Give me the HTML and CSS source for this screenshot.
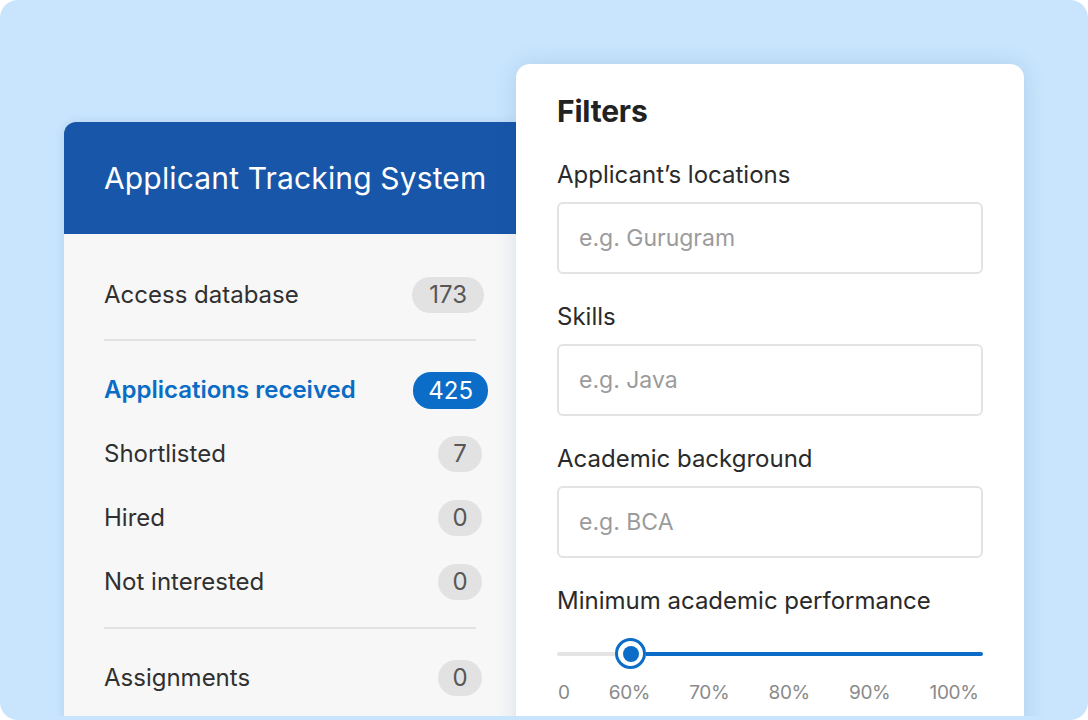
FILE: index.html
```html
<!DOCTYPE html>
<html lang="en">
<head>
<meta charset="utf-8">
<title>Applicant Tracking System</title>
<link rel="stylesheet" href="styles.css">
</head>
<body>
<div class="frame">
  <div class="stage">
    <section class="ats">
      <header class="ats-head">
        <h1 class="ats-title">Applicant Tracking System</h1>
      </header>
      <div class="ats-body">
        <div class="row"><span class="row-label">Access database</span><span class="badge badge-wide">173</span></div>
        <div class="divider"></div>
        <div class="row row-active"><span class="row-label">Applications received</span><span class="badge badge-active">425</span></div>
        <div class="row"><span class="row-label">Shortlisted</span><span class="badge">7</span></div>
        <div class="row"><span class="row-label">Hired</span><span class="badge">0</span></div>
        <div class="row"><span class="row-label">Not interested</span><span class="badge">0</span></div>
        <div class="divider divider-low"></div>
        <div class="row"><span class="row-label">Assignments</span><span class="badge">0</span></div>
      </div>
    </section>

    <section class="filters">
      <h2 class="filters-title">Filters</h2>
      <div class="field">
        <label class="field-label" for="loc">Applicant’s locations</label>
        <input class="field-input" id="loc" type="text" placeholder="e.g. Gurugram">
      </div>
      <div class="field">
        <label class="field-label" for="skills">Skills</label>
        <input class="field-input" id="skills" type="text" placeholder="e.g. Java">
      </div>
      <div class="field">
        <label class="field-label" for="acad">Academic background</label>
        <input class="field-input" id="acad" type="text" placeholder="e.g. BCA">
      </div>
      <div class="field">
        <span class="field-label">Minimum academic performance</span>
        <div class="slider">
          <div class="slider-rest"></div>
          <div class="slider-thumb"><span class="slider-dot"></span></div>
          <div class="slider-fill"></div>
        </div>
        <div class="scale">
          <span>0</span><span>60%</span><span>70%</span><span>80%</span><span>90%</span><span>100%</span>
        </div>
      </div>
    </section>
  </div>
</div>
</body>
</html>
```

FILE: styles.css
```css
* { box-sizing: border-box; }

html, body {
  margin: 0;
  padding: 0;
  background: #ffffff;
  font-family: "Inter", "Noto Sans", "Liberation Sans", sans-serif;
}

.frame {
  width: 1088px;
  height: 720px;
  border-radius: 18px;
  background: #c9e5fd;
  overflow: hidden;
}

.stage {
  height: 716px;
  overflow: hidden;
  display: flex;
  align-items: flex-start;
  padding: 64px 0 0 64px;
}

/* ---------- Left card ---------- */
.ats {
  width: 452px;
  margin-top: 58px;
  background: #f7f7f7;
  border-radius: 12px 0 0 0;
  box-shadow: 0 0 10px rgba(20, 70, 140, 0.12);
  flex: none;
  min-height: 640px;
}

.ats-head {
  height: 112px;
  background: #1756a8;
  border-radius: 12px 0 0 0;
  display: flex;
  align-items: center;
  padding: 0 0 0 40px;
}

.ats-title {
  margin: 0;
  color: #ffffff;
  font-size: 30px;
  font-weight: 400;
  line-height: 36px;
  white-space: nowrap;
  letter-spacing: 0.15px;
}

.ats-body {
  padding: 29px 34px 0 40px;
}

.row {
  height: 64px;
  display: flex;
  align-items: center;
  justify-content: space-between;
}

.row-label {
  font-size: 24px;
  color: #303030;
  line-height: 30px;
}

.row-active .row-label {
  color: #0b6cc5;
  font-weight: 600;
}

.badge {
  height: 36px;
  min-width: 44px;
  padding: 0 14px;
  border-radius: 18px;
  background: #e2e2e2;
  color: #575757;
  font-size: 24px;
  line-height: 36px;
  text-align: center;
}

.badge-wide {
  padding: 0 17px;
  margin-right: -2px;
}

.badge-active {
  background: #0b6dc7;
  color: #ffffff;
  height: 37px;
  line-height: 37px;
  padding: 0 15px;
  margin-right: -6px;
}

.divider {
  height: 2px;
  background: #e3e3e3;
  margin: 12px 6px 17px 0;
}

.divider-low { margin-top: 13px; }

/* ---------- Filters card ---------- */
.filters {
  width: 508px;
  flex: none;
  position: relative;
  z-index: 1;
  background: #ffffff;
  border-radius: 14px;
  box-shadow: 0 0 22px rgba(30, 80, 140, 0.14);
  padding: 29px 41px 40px 41px;
  min-height: 700px;
}

.filters-title {
  margin: 0;
  padding-bottom: 3px;
  font-size: 30px;
  font-weight: 700;
  line-height: 36px;
  color: #222222;
  letter-spacing: -0.2px;
}

.field {
  margin-top: 29px;
  display: flex;
  flex-direction: column;
}

.field-label {
  font-size: 24px;
  line-height: 28px;
  color: #2a2a2a;
}

.field-input {
  margin-top: 13px;
  width: 426px;
  height: 72px;
  border: 2px solid #e3e3e3;
  border-radius: 6px;
  padding: 0 20px;
  font-family: inherit;
  font-size: 23px;
  color: #333333;
  background: #ffffff;
  outline: none;
}

.field-input::placeholder {
  color: #9b9b9b;
}

.slider {
  margin-top: 23px;
  width: 426px;
  height: 31px;
  display: flex;
  align-items: center;
}

.slider-rest {
  width: 58px;
  height: 4px;
  background: #e4e4e4;
  border-radius: 2px 0 0 2px;
}

.slider-thumb {
  width: 31px;
  height: 31px;
  border-radius: 50%;
  border: 3px solid #0b6dc7;
  background: #ffffff;
  display: flex;
  align-items: center;
  justify-content: center;
  flex: none;
}

.slider-dot {
  width: 16px;
  height: 16px;
  border-radius: 50%;
  background: #0b6dc7;
}

.slider-fill {
  flex: 1;
  height: 4px;
  background: #0b6dc7;
  border-radius: 0 2px 2px 0;
}

.scale {
  margin-top: 12px;
  display: flex;
  gap: 39px;
  padding-left: 1px;
  font-size: 19px;
  line-height: 24px;
  letter-spacing: -0.3px;
  color: #8a8a8a;
}
```
